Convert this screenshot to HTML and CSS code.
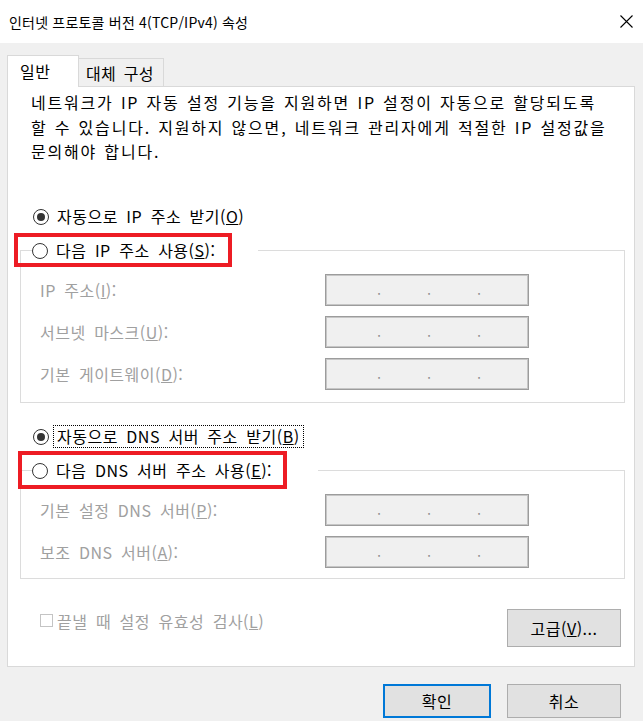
FILE: index.html
```html
<!DOCTYPE html>
<html lang="ko">
<head>
<meta charset="utf-8">
<title>인터넷 프로토콜 버전 4(TCP/IPv4) 속성</title>
<link rel="stylesheet" href="styles.css">
</head>
<body>
<div class="window">
  <header class="titlebar">
    <span class="title">인터넷 프로토콜 버전 4(TCP/IPv4) 속성</span>
    <svg class="close" width="13" height="13" viewBox="0 0 13 13"><path d="M0.5 0.5L12.5 12.5M12.5 0.5L0.5 12.5" stroke="#000" stroke-width="1.1" fill="none"/></svg>
  </header>

  <div class="tabs">
    <div class="tab active">일반</div>
    <div class="tab inactive">대체 구성</div>
  </div>

  <div class="panel">
    <p class="desc">네트워크가 IP 자동 설정 기능을 지원하면 IP 설정이 자동으로 할당되도록<br>할 수 있습니다. 지원하지 않으면, 네트워크 관리자에게 적절한 IP 설정값을<br>문의해야 합니다.</p>

    <div class="radio-row r-auto-ip"><span class="radio checked"></span><span class="rlabel">자동으로 IP 주소 받기(<u>O</u>)</span></div>

    <fieldset class="group g-ip">
      <legend class="legend l-ip"><span class="legend-inner"><span class="radio"></span><span class="rlabel">다음 IP 주소 사용(<u>S</u>):</span></span><span class="mark m-ip"></span></legend>
      <div class="field"><span class="flabel">IP 주소(<u>I</u>):</span><div class="ipbox"><span class="seg"></span><span class="dot">.</span><span class="seg"></span><span class="dot">.</span><span class="seg"></span><span class="dot">.</span></div></div>
      <div class="field"><span class="flabel">서브넷 마스크(<u>U</u>):</span><div class="ipbox"><span class="seg"></span><span class="dot">.</span><span class="seg"></span><span class="dot">.</span><span class="seg"></span><span class="dot">.</span></div></div>
      <div class="field"><span class="flabel">기본 게이트웨이(<u>D</u>):</span><div class="ipbox"><span class="seg"></span><span class="dot">.</span><span class="seg"></span><span class="dot">.</span><span class="seg"></span><span class="dot">.</span></div></div>
    </fieldset>

    <div class="radio-row r-auto-dns"><span class="radio checked"></span><span class="rlabel focus">자동으로 DNS 서버 주소 받기(<u>B</u>)</span></div>

    <fieldset class="group g-dns">
      <legend class="legend l-dns"><span class="legend-inner"><span class="radio"></span><span class="rlabel">다음 DNS 서버 주소 사용(<u>E</u>):</span></span><span class="mark m-dns"></span></legend>
      <div class="field"><span class="flabel">기본 설정 DNS 서버(<u>P</u>):</span><div class="ipbox"><span class="seg"></span><span class="dot">.</span><span class="seg"></span><span class="dot">.</span><span class="seg"></span><span class="dot">.</span></div></div>
      <div class="field"><span class="flabel">보조 DNS 서버(<u>A</u>):</span><div class="ipbox"><span class="seg"></span><span class="dot">.</span><span class="seg"></span><span class="dot">.</span><span class="seg"></span><span class="dot">.</span></div></div>
    </fieldset>

    <div class="panel-bottom">
      <div class="check-row"><span class="checkbox"></span><span class="clabel">끝낼 때 설정 유효성 검사(<u>L</u>)</span></div>
      <button class="btn btn-adv" type="button">고급(<u>V</u>)...</button>
    </div>
  </div>

  <div class="dialog-buttons">
    <button class="btn btn-ok" type="button">확인</button>
    <button class="btn btn-cancel" type="button">취소</button>
  </div>
</div>
</body>
</html>
```

FILE: styles.css
```css
html, body {
  margin: 0;
  padding: 0;
}

body {
  background: #f0f0f0;
  font-family: "Noto Sans CJK KR", "Noto Sans", sans-serif;
  font-size: 16px;
  letter-spacing: 0.5px;
  word-spacing: 3.5px;
  color: #000;
}

.window {
  width: 643px;
  height: 721px;
  overflow: hidden;
}

/* title bar */
.titlebar {
  height: 43px;
  background: #fff;
  display: flex;
  align-items: center;
  justify-content: space-between;
  padding: 0 10px 0 9px;
}

.title {
  font-size: 14px;
  letter-spacing: 0.2px;
  word-spacing: 0;
  line-height: 20px;
}

.close {
  display: block;
}

/* tabs */
.tabs {
  display: flex;
  align-items: flex-end;
  height: 31px;
  margin: 12px 0 0 7px;
}

.tab {
  box-sizing: border-box;
  border: 1px solid #d9d9d9;
  border-bottom: none;
  line-height: 20px;
}

.tab.active {
  width: 72px;
  height: 32px;
  margin-bottom: -1px;
  padding: 5px 0 0 12px;
  background: #fff;
  position: relative;
  z-index: 1;
}

.tab.inactive {
  width: 85px;
  height: 28px;
  padding: 4px 0 0 7px;
  border-left: none;
  background: #f0f0f0;
  letter-spacing: 0.3px;
  word-spacing: 3px;
}

/* panel */
.panel {
  box-sizing: border-box;
  width: 628px;
  height: 581px;
  margin-left: 7px;
  background: #fff;
  border: 1px solid #d9d9d9;
  display: flex;
  flex-direction: column;
}

.desc {
  margin: 3px 0 0;
  padding-left: 23px;
  line-height: 24.5px;
  white-space: nowrap;
  letter-spacing: 1.8px;
  word-spacing: 1px;
}

.radio-row {
  display: flex;
  align-items: center;
  gap: 4px;
  height: 24px;
  padding-left: 25px;
}

.r-auto-ip {
  margin-top: 41px;
}

.r-auto-dns {
  margin-top: 22px;
}

.radio {
  box-sizing: border-box;
  width: 16px;
  height: 16px;
  border: 1px solid #333;
  border-radius: 50%;
  background: #fff;
  display: flex;
  align-items: center;
  justify-content: center;
  flex: none;
}

.radio.checked::after {
  content: "";
  width: 8px;
  height: 8px;
  border-radius: 50%;
  background: #333;
}

.rlabel {
  box-sizing: border-box;
  padding: 0 3px;
  border: 1px solid transparent;
  line-height: 21px;
  white-space: nowrap;
}

.rlabel.focus {
  border: 1px dotted #000;
}

/* group boxes */
.group {
  margin: 10px 9px 0 12px;
  padding: 11px 0 12px 0;
  border: 1px solid #dcdcdc;
  min-inline-size: 0;
  display: flex;
  flex-direction: column;
  gap: 10px;
}

.g-dns {
  padding-bottom: 10px;
}

.legend {
  position: relative;
  margin-left: 11px;
  padding: 0;
  height: 24px;
  box-sizing: border-box;
}

.l-ip {
  width: 226px;
}

.l-dns {
  width: 286px;
}

.legend-inner {
  display: flex;
  align-items: center;
  gap: 4px;
  height: 24px;
  background: #fff;
}

.mark {
  position: absolute;
  box-sizing: border-box;
  border: 4px solid #ed1c24;
  pointer-events: none;
}

.m-ip {
  left: -18px;
  top: -6px;
  width: 218px;
  height: 34px;
}

.m-dns {
  left: -14px;
  top: -8px;
  width: 269px;
  height: 38px;
}

.field {
  display: grid;
  grid-template-columns: 285px 204px;
  align-items: center;
  height: 32px;
  margin-left: 19px;
}

.flabel {
  color: #a0a0a0;
  white-space: nowrap;
}

.ipbox {
  box-sizing: border-box;
  width: 204px;
  height: 32px;
  border: 1px solid #9c9c9c;
  box-shadow: inset 0 0 0 1px #c6c6c6;
  background: #f0f0f0;
  display: flex;
  align-items: center;
  padding-left: 6px;
  letter-spacing: 0;
  line-height: 30px;
}

.seg {
  width: 44px;
  flex: none;
}

.dot {
  width: 6px;
  flex: none;
  text-align: center;
  color: #8a8a8a;
  font-size: 13px;
}

/* bottom of panel */
.panel-bottom {
  display: flex;
  justify-content: space-between;
  align-items: flex-start;
  margin: 30px 13px 0 32px;
}

.check-row {
  display: flex;
  align-items: center;
  gap: 4px;
  height: 24px;
}

.checkbox {
  box-sizing: border-box;
  width: 13px;
  height: 13px;
  border: 1px solid #c4c4c4;
  background: #fff;
}

.clabel {
  color: #a0a0a0;
  white-space: nowrap;
}

.btn {
  box-sizing: border-box;
  font: inherit;
  letter-spacing: 0.5px;
  color: #000;
  background: #e1e1e1;
  border: 1px solid #adadad;
  padding: 0;
  margin: 0;
}

.btn-adv {
  width: 114px;
  height: 38px;
}

.dialog-buttons {
  display: flex;
  justify-content: flex-end;
  gap: 16px;
  margin-top: 17px;
  padding-right: 22px;
}

.btn-ok {
  width: 108px;
  height: 34px;
  border: 2px solid #0078d7;
}

.btn-cancel {
  width: 114px;
  height: 34px;
}
```
